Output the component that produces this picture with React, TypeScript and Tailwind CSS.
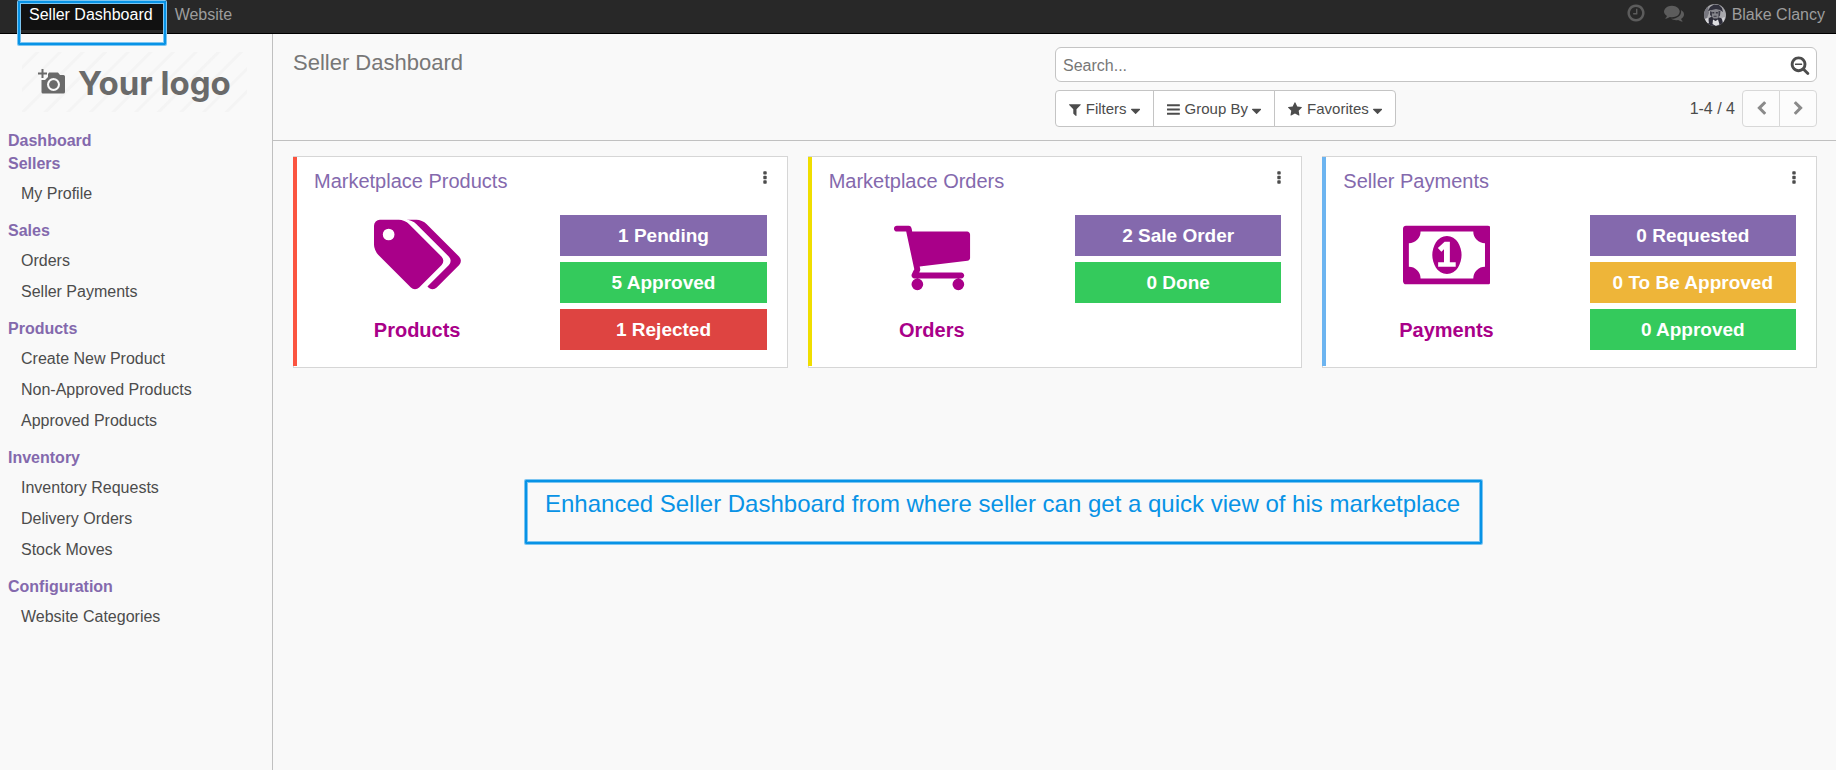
import type { ReactNode } from "react";

const paths = {
  tags: "M448 448q0-53-37.5-90.5t-90.5-37.5-90.5 37.5-37.5 90.5 37.5 90.5 90.5 37.5 90.5-37.5 37.5-90.5zm1067 576q0 53-37 90l-491 492q-39 37-91 37-53 0-90-37l-715-716q-38-37-64.500-101t-26.500-117v-416q0-52 38-90t90-38h416q53 0 117 26.500t102 64.500l715 714q37 39 37 91zm384 0q0 53-37 90l-491 492q-39 37-91 37-36 0-59-14t-53-45l470-470q37-37 37-90 0-52-37-91l-715-714q-38-38-102-64.500t-117-26.500h224q53 0 117 26.500t102 64.500l715 714q37 39 37 91z",
  cart: "M704 1536q0 52-38 90t-90 38-90-38-38-90 38-90 90-38 90 38 38 90zm896 0q0 52-38 90t-90 38-90-38-38-90 38-90 90-38 90 38 38 90zm128-1088v512q0 24-16.500 42.500t-40.500 21.500l-1044 122q13 60 13 70 0 16-24 64h920q26 0 45 19t19 45-19 45-45 19h-1024q-26 0-45-19t-19-45q0-11 8-31.500t16-36 21.500-40 15.500-29.500l-177-823h-204q-26 0-45-19t-19-45 19-45 45-19h256q16 0 28.500 6.500t19.500 15.500 13 24.500 8 26 5.500 29.500 4.500 26h1201q26 0 45 19t19 45z",
  money: "M768 1152h384v-96h-128v-448h-114l-148 137 77 80q42-37 55-57h2v288h-128v96zm512-256q0 70-21 142t-59.500 134-101.500 101-138 39-138-39-101.500-101-59.500-134-21-142 21-142 59.500-134 101.500-101 138-39 138 39 101.500 101 59.500 134 21 142zm512 256v-512q-106 0-181-75t-75-181h-1152q0 106-75 181t-181 75v512q106 0 181 75t75 181h1152q0-106 75-181t181-75zm128-832v1152q0 26-19 45t-45 19h-1792q-26 0-45-19t-19-45v-1152q0-26 19-45t45-19h1792q26 0 45 19t19 45z",
  clock: "M1024 544v448q0 14-9 23t-23 9h-320q-14 0-23-9t-9-23v-64q0-14 9-23t23-9h224v-352q0-14 9-23t23-9h64q14 0 23 9t9 23zm416 352q0-148-73-273t-198-198-273-73-273 73-198 198-73 273 73 273 198 198 273 73 273-73 198-198 73-273zm224 0q0 209-103 385.500t-279.500 279.500-385.500 103-385.500-103-279.500-279.500-103-385.500 103-385.500 279.500-279.500 385.500-103 385.500 103 279.500 279.500 103 385.500z",
  comments: "M1408 768q0 139-94 257t-256.500 186.500-353.500 68.500q-86 0-176-16-124 88-278 128-36 9-86 16h-3q-11 0-20.500-8t-11.500-21q-1-3-1-6.500t.5-6.500 2-6l2.500-5 3.500-5.500 4-5 4.500-5 4-4.500q5-6 23-25t26-29.500 22.500-29 25-38.500 20.500-44q-124-72-195-177t-71-224q0-139 94-257t256.500-186.500 353.500-68.500 353.500 68.500 256.500 186.500 94 257zm384 256q0 120-71 224.500t-195 176.500q10 24 20.500 44t25 38.500 22.500 29 26 29.500 23 25q1 1 4 4.500t4.500 5 4 5 3.500 5.500l2.500 5 2 6 .5 6.500-1 6.500q-3 14-13 22t-22 7q-50-7-86-16-154-40-278-128-90 16-176 16-271 0-472-132 58 4 88 4 161 0 309-45t264-129q125-92 192-212t67-254q0-77-23-152 129 71 204 178t75 230z",
  filter: "M1595 295q17 41-14 70l-493 493v742q0 42-39 59-13 5-25 5-27 0-45-19l-256-256q-19-19-19-45v-486l-493-493q-31-29-14-70 17-39 59-39h1280q42 0 59 39z",
  bars: "M1664 1344v128q0 26-19 45t-45 19h-1408q-26 0-45-19t-19-45v-128q0-26 19-45t45-19h1408q26 0 45 19t19 45zm0-512v128q0 26-19 45t-45 19h-1408q-26 0-45-19t-19-45v-128q0-26 19-45t45-19h1408q26 0 45 19t19 45zm0-512v128q0 26-19 45t-45 19h-1408q-26 0-45-19t-19-45v-128q0-26 19-45t45-19h1408q26 0 45 19t19 45z",
  star: "M1728 647q0 22-26 48l-363 354 86 500q1 7 1 20 0 21-10.500 35.500t-30.500 14.500q-19 0-40-12l-449-236-449 236q-22 12-40 12-21 0-31.500-14.500t-10.500-35.500q0-6 2-20l86-500-364-354q-25-27-25-48 0-37 56-46l502-73 225-455q19-41 49-41t49 41l225 455 502 73q56 9 56 46z",
  searchMinus: "M1088 800v64q0 13-9.500 22.500t-22.500 9.500h-576q-13 0-22.500-9.500t-9.500-22.500v-64q0-13 9.500-22.500t22.500-9.500h576q13 0 22.500 9.500t9.500 22.500zm128 32q0-185-131.500-316.500t-316.500-131.500-316.500 131.500-131.500 316.500 131.500 316.500 316.500 131.500 316.500-131.500 131.500-316.500zm512 832q0 53-37.500 90.500t-90.500 37.500q-54 0-90-38l-343-342q-179 124-399 124-143 0-273.500-55.500t-225-150-150-225-55.500-273.500 55.500-273.500 150-225 225-150 273.500-55.500 273.500 55.500 225 150 150 225 55.500 273.500q0 220-124 399l343 343q37 37 37 90z",
  left: "M1427 301l-531 531 531 531q19 19 19 45t-19 45l-166 166q-19 19-45 19t-45-19l-742-742q-19-19-19-45t19-45l742-742q19-19 45-19t45 19l166 166q19 19 19 45t-19 45z",
  right: "M1363 877l-742 742q-19 19-45 19t-45-19l-166-166q-19-19-19-45t19-45l531-531-531-531q-19-19-19-45t19-45l166-166q19-19 45-19t45 19l742 742q19 19 19 45t-19 45z",
  caret: "M1408 832q0 26-19 45l-448 448q-19 19-45 19t-45-19l-448-448q-19-19-19-45t19-45 45-19h896q26 0 45 19t19 45z",
  dots: "M1088 1248v192q0 40-28 68t-68 28h-192q-40 0-68-28t-28-68v-192q0-40 28-68t68-28h192q40 0 68 28t28 68zm0-512v192q0 40-28 68t-68 28h-192q-40 0-68-28t-28-68v-192q0-40 28-68t68-28h192q40 0 68 28t28 68zm0-512v192q0 40-28 68t-68 28h-192q-40 0-68-28t-28-68v-192q0-40 28-68t68-28h192q40 0 68 28t28 68z",
};

type IconName = keyof typeof paths;

function Icon({ name, className, x = 0, width = 1792 }: { name: IconName; className: string; x?: number; width?: number }) {
  return (
    <svg viewBox={`${x} 0 ${width} 1792`} className={className} fill="currentColor" aria-hidden="true">
      <path d={paths[name]} />
    </svg>
  );
}

const sections = [
  { title: "Sellers", items: ["My Profile"] },
  { title: "Sales", items: ["Orders", "Seller Payments"] },
  { title: "Products", items: ["Create New Product", "Non-Approved Products", "Approved Products"] },
  { title: "Inventory", items: ["Inventory Requests", "Delivery Orders", "Stock Moves"] },
  { title: "Configuration", items: ["Website Categories"] },
];

const purple = "bg-[#8469ad]";
const green = "bg-[#34ca5c]";
const red = "bg-[#de4441]";
const amber = "bg-[#eeb539]";

const cards: {
  title: string;
  label: string;
  strip: string;
  icon: ReactNode;
  badges: [string, string][];
}[] = [
  {
    title: "Marketplace Products",
    label: "Products",
    strip: "bg-[#fb5440]",
    icon: <Icon name="tags" width={1899} className="h-[82px]" />,
    badges: [["1 Pending", purple], ["5 Approved", green], ["1 Rejected", red]],
  },
  {
    title: "Marketplace Orders",
    label: "Orders",
    strip: "bg-[#f0de00]",
    icon: <Icon name="cart" className="h-[82px]" />,
    badges: [["2 Sale Order", purple], ["0 Done", green]],
  },
  {
    title: "Seller Payments",
    label: "Payments",
    strip: "bg-[#6cb4f0]",
    icon: <Icon name="money" width={1920} className="h-[82px]" />,
    badges: [["0 Requested", purple], ["0 To Be Approved", amber], ["0 Approved", green]],
  },
];

const marker =
  "border-2 border-[#0893e6] shadow-[0_0_0_1px_#7cc5f1,inset_0_0_0_1px_#7cc5f1] rounded-[1px]";

function Avatar() {
  return (
    <svg viewBox="0 0 22 22" className="size-[22px]" aria-hidden="true">
      <defs>
        <clipPath id="avatar-clip"><circle cx="11" cy="11" r="11" /></clipPath>
      </defs>
      <g clipPath="url(#avatar-clip)">
        <rect width="22" height="22" fill="#a9a9ad" />
        <path d="M0 4l4-2 1 7-2 5-3 1z" fill="#77777f" />
        <path d="M3 22l2-8 4-2 4 1 4 1 2 3 1 5z" fill="#2c2c38" />
        <path d="M7 5h8l.5 6-2 3.500h-4L7.500 12z" fill="#85858c" />
        <path d="M4 7l2-4 4-2.500 5 .5 3 3 1 4-3-2-4-1-4 1z" fill="#30303c" />
        <path d="M6 7l2 1v5l-2-2zM14.500 7l2-.5-.5 5-1.500 2z" fill="#3c3c48" />
        <path d="M8.300 8h2v1.400h-2zM11.800 8h2v1.400h-2zM9.600 11.800h3v1h-3z" fill="#34343f" />
        <path d="M9 15.500l2.500 1.500 2.500-1.500 1.500 5-3.500 1.500-3.500-2z" fill="#dedee0" />
        <path d="M1 15l3-1 1 5-2 1zM18 14l3-1-2 7z" fill="#d4d4d8" />
      </g>
    </svg>
  );
}

function Logo() {
  return (
    <a
      href="#"
      className="mr-[25px] ml-[22px] flex h-[60px] items-center bg-[repeating-linear-gradient(135deg,#f9f9f9_0_9px,#f4f4f4_10px_12px,#f9f9f9_13px_16px)] pl-4 text-[#6a6a6a]"
    >
      <svg viewBox="0 0 28 26" className="h-[26px] w-7 shrink-0" aria-hidden="true">
        <path d="M4.500 0v9M0 4.500h9" stroke="currentColor" strokeWidth="2" fill="none" />
        <path
          fillRule="evenodd"
          fill="currentColor"
          d="M11 3.500h9l2 2.500h3.500q1.500 0 1.500 1.500v15.500q0 1.500-1.500 1.500H5q-1.500 0-1.500-1.500V11H7l3-3V5zM15.500 9a6.500 6.500 0 100 13 6.500 6.500 0 000-13zm0 2.200a4.300 4.300 0 110 8.600 4.300 4.300 0 010-8.600z"
        />
        <circle cx="15.500" cy="15.500" r="4" fill="currentColor" />
      </svg>
      <span className="ml-3 pt-0.5 font-[Inter,sans-serif] text-[33px] leading-9 font-bold whitespace-nowrap">Your logo</span>
    </a>
  );
}

function FilterButton({
  icon,
  x,
  width,
  children,
  className = "",
}: {
  icon: IconName;
  x: number;
  width: number;
  children: ReactNode;
  className?: string;
}) {
  return (
    <button
      type="button"
      className={`-ml-px flex items-center border border-[#c4c4c4] bg-white px-[13px] pt-0.5 text-[15px] first:ml-0 ${className}`}
    >
      <Icon name={icon} x={x} width={width} className="mr-[5px] h-[15px]" />
      {children}
      <Icon name="caret" x={384} width={1024} className="ml-1 h-4" />
    </button>
  );
}

export default function App() {
  return (
    <div className="flex min-h-screen flex-col bg-[#f9f9f9] font-['Liberation_Sans',Arial,sans-serif] text-base text-[#4c4c4c]">
      <header className="relative flex h-[34px] items-start border-b border-black bg-[#282828] pr-[11px] pl-[19px] text-[#9d9d9d]">
        <nav className="flex gap-0.5 leading-[30px]">
          <a href="#" className="bg-[#111111] px-2.5 text-white">Seller Dashboard</a>
          <a href="#" className="px-2.5">Website</a>
        </nav>
        <div className="ml-auto flex items-start text-[#5c5c5c]">
          <button type="button" aria-label="Activities" className="mr-[18px] pt-[3px]">
            <Icon name="clock" className="size-5" />
          </button>
          <button type="button" aria-label="Conversations" className="mr-5 pt-[3px]">
            <Icon name="comments" className="size-5" />
          </button>
          <button type="button" className="flex h-[30px] items-center gap-1.5 text-[#9d9d9d]">
            <Avatar />
            Blake Clancy
          </button>
        </div>
        <div className={`pointer-events-none absolute top-px left-[18px] h-11 w-[148px] ${marker}`} />
      </header>

      <div className="flex grow">
        <aside className="w-[273px] shrink-0 border-r border-[#c0c0c0] pt-[18px]">
          <Logo />
          <nav className="mt-[17px] px-2">
            <a href="#" className="block leading-[23px] font-bold text-[#8469ad]">Dashboard</a>
            {sections.map((s) => (
              <section key={s.title} className="mb-2.5">
                <h2 className="leading-[23px] font-bold text-[#8469ad]">{s.title}</h2>
                <ul className="mt-[3px] pl-[13px]">
                  {s.items.map((item) => (
                    <li key={item} className="leading-[31px]">
                      <a href="#">{item}</a>
                    </li>
                  ))}
                </ul>
              </section>
            ))}
          </nav>
        </aside>

        <main className="min-w-0 grow">
          <div className="flex h-[107px] justify-between border-b border-[#c0c0c0] pt-[13px] pr-[19px] pl-5">
            <h1 className="text-[22px] leading-8 text-[#777777]">Seller Dashboard</h1>
            <div className="w-1/2">
              <label className="flex h-[35px] items-center rounded-md border border-[#c4c4c4] bg-white pr-1.5 pl-[7px]">
                <input
                  type="text"
                  aria-label="Search"
                  placeholder="Search..."
                  className="min-w-0 grow bg-transparent pt-0.5 outline-none placeholder:text-[#777777]"
                />
                <Icon name="searchMinus" className="size-5" />
              </label>
              <div className="mt-2 flex items-center">
                <div className="flex h-[37px]">
                  <FilterButton icon="filter" x={192} width={1408} className="rounded-l-[4px]">Filters</FilterButton>
                  <FilterButton icon="bars" x={128} width={1536}>Group By</FilterButton>
                  <FilterButton icon="star" x={64} width={1664} className="rounded-r-[4px]">Favorites</FilterButton>
                </div>
                <span className="mr-[7px] ml-auto">1-4 / 4</span>
                <div className="flex h-[37px] text-[#8a8a8a]">
                  <button type="button" aria-label="Previous" className="flex w-[38px] items-center justify-center rounded-l-[4px] border border-[#d8d8d8] bg-[#fcfcfc]">
                    <Icon name="left" className="size-[15px]" />
                  </button>
                  <button type="button" aria-label="Next" className="-ml-px flex w-[38px] items-center justify-center rounded-r-[4px] border border-[#d8d8d8] bg-[#fcfcfc]">
                    <Icon name="right" className="size-[15px]" />
                  </button>
                </div>
              </div>
            </div>
          </div>

          <div className="grid grid-cols-3 gap-5 pt-[15px] pr-[19px] pl-5">
            {cards.map((c) => (
              <article key={c.title} className="flex h-[212px] border border-[#d6d6d6] bg-white">
                <div className={`-mr-[3px] mb-px -ml-px w-1 ${c.strip}`} />
                <div className="grow">
                  <div className="flex items-start justify-between pt-2 pr-3.5 pl-5">
                    <h2 className="text-xl leading-8 text-[#8469ad]">{c.title}</h2>
                    <button type="button" aria-label={`${c.title} menu`} className="mt-[5px]">
                      <Icon name="dots" className="size-4" />
                    </button>
                  </div>
                  <div className="mt-[17px] grid grid-cols-2">
                    <div className="flex flex-col items-center text-[#a90089]">
                      {c.icon}
                      <p className="mt-[18px] text-xl leading-8 font-bold">{c.label}</p>
                    </div>
                    <div className="flex flex-col gap-1.5 px-5 pt-px">
                      {c.badges.map(([text, tone]) => (
                        <button key={text} type="button" className={`h-[41px] pt-0.5 text-[19px] font-bold text-white ${tone}`}>
                          {text}
                        </button>
                      ))}
                    </div>
                  </div>
                </div>
              </article>
            ))}
          </div>

          <p className={`mt-[112px] ml-[252px] h-16 w-fit pt-1.5 pr-5 pl-[18px] text-2xl leading-8 text-[#0893e6] ${marker}`}>
            Enhanced Seller Dashboard from where seller can get a quick view of his marketplace
          </p>
        </main>
      </div>
    </div>
  );
}
